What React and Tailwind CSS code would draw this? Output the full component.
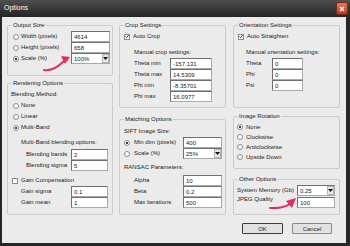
import React from 'react';

function TextBox({ value, className = '' }) {
  return (
    <div
      className={`h-[11px] shrink-0 bg-white border border-[#a9a9a9] border-t-[#707070] border-l-[#707070] flex items-center pl-[2px] leading-none ${className}`}
    >
      {value}
    </div>
  );
}

function Combo({ value, className = '' }) {
  return (
    <div
      className={`h-[11px] shrink-0 bg-white border border-[#a9a9a9] border-t-[#707070] border-l-[#707070] flex items-center leading-none ${className}`}
    >
      <span className="flex-1 pl-[2px]">{value}</span>
      <span className="w-[7px] h-[9px] bg-[#e6e6e6] border border-[#b5b5b5] flex items-center justify-center">
        <svg width="5" height="3" viewBox="0 0 5 3">
          <polygon points="0,0 5,0 2.5,3" fill="#111" />
        </svg>
      </span>
    </div>
  );
}

function Radio({ checked }) {
  return (
    <span className="w-[6px] h-[6px] rounded-full border border-[#8c8c8c] bg-white flex items-center justify-center shrink-0">
      {checked && <span className="w-[2px] h-[2px] rounded-full bg-black" />}
    </span>
  );
}

function Check({ checked }) {
  return (
    <span className="w-[6px] h-[6px] border border-[#8c8c8c] bg-white flex items-center justify-center shrink-0">
      {checked && (
        <svg width="5" height="5" viewBox="0 0 5 5">
          <path d="M0.5 2.5 L2 4 L4.5 0.7" stroke="#111" strokeWidth="1" fill="none" />
        </svg>
      )}
    </span>
  );
}

function Group({ title, className = '', children }) {
  return (
    <fieldset className={`border border-[#cbcbcb] rounded-[2px] ${className}`}>
      <legend className="ml-[4px] px-[1px] leading-[8px]">{title}</legend>
      {children}
    </fieldset>
  );
}

function Row({ className = '', children }) {
  return <div className={`h-[11px] flex items-center ${className}`}>{children}</div>;
}

export default function App() {
  return (
    <div className="relative w-[350px] h-[246px] flex flex-col bg-[#262626] overflow-hidden whitespace-nowrap font-['Tahoma','Liberation_Sans',sans-serif] text-[6px] text-[#222]">
      {/* title bar */}
      <div className="h-[17px] shrink-0 flex items-center justify-between bg-gradient-to-b from-[#505050] to-[#242424] pl-[4px] pr-[2px]">
        <span className="text-white text-[7px]">Options</span>
        <span className="w-[12px] h-[13px] rounded-[2px] border border-[#7a2a1a] bg-gradient-to-b from-[#e9795c] to-[#c4321b] flex items-center justify-center">
          <svg width="6" height="6" viewBox="0 0 6 6">
            <path d="M1 1 L5 5 M5 1 L1 5" stroke="#fff" strokeWidth="1.4" />
          </svg>
        </span>
      </div>

      <div className="flex-1 ml-[2px] mr-[4px] mb-[3px] bg-[#ebebeb] flex pl-[5px] pt-[4px]">
        {/* column 1 */}
        <div className="w-[106px] flex flex-col">
          <Group title="Output Size" className="pt-[2px] pb-[11px] pr-[2px]">
            <Row className="pl-[5px]">
              <Radio />
              <span className="ml-[2px]">Width (pixels)</span>
              <TextBox value="4614" className="ml-auto w-[39px]" />
            </Row>
            <Row className="pl-[5px]">
              <Radio />
              <span className="ml-[2px]">Height (pixels)</span>
              <TextBox value="658" className="ml-auto w-[39px]" />
            </Row>
            <Row className="pl-[5px]">
              <Radio checked />
              <span className="ml-[2px]">Scale (%)</span>
              <Combo value="100%" className="ml-auto w-[39px]" />
            </Row>
          </Group>

          <Group title="Rendering Options" className="mt-[3px] pt-[2px] pb-[6px] pr-[4px]">
            <Row className="pl-[3px]">Blending Method:</Row>
            <Row className="pl-[5px]">
              <Radio />
              <span className="ml-[2px]">None</span>
            </Row>
            <Row className="pl-[5px]">
              <Radio />
              <span className="ml-[2px]">Linear</span>
            </Row>
            <Row className="pl-[5px]">
              <Radio checked />
              <span className="ml-[2px]">Multi-Band</span>
            </Row>
            <Row className="pl-[13px] mt-[4px]">Multi-Band blending options:</Row>
            <Row className="pl-[18px] mt-[1px]">
              <span>Blending bands</span>
              <TextBox value="2" className="ml-auto w-[37px]" />
            </Row>
            <Row className="pl-[18px]">
              <span>Blending sigma</span>
              <TextBox value="5" className="ml-auto w-[37px]" />
            </Row>
            <Row className="pl-[4px] mt-[4px]">
              <Check />
              <span className="ml-[3px]">Gain Compensation</span>
            </Row>
            <Row className="pl-[13px]">
              <span>Gain sigma</span>
              <TextBox value="0.1" className="ml-auto w-[37px]" />
            </Row>
            <Row className="pl-[13px]">
              <span>Gain mean</span>
              <TextBox value="1" className="ml-auto w-[37px]" />
            </Row>
          </Group>
        </div>

        {/* column 2 */}
        <div className="w-[107px] ml-[6px] flex flex-col">
          <Group title="Crop Settings" className="pt-[2px] pb-[5px]">
            <Row className="pl-[4px]">
              <Check checked />
              <span className="ml-[3px]">Auto Crop</span>
            </Row>
            <Row className="pl-[14px] mt-[5px]">Manual crop settings:</Row>
            <div className="pl-[14px] pr-[13px]">
              <Row>
                <span>Theta min</span>
                <TextBox value="-157.131" className="ml-auto w-[42px]" />
              </Row>
              <Row>
                <span>Theta max</span>
                <TextBox value="14.5309" className="ml-auto w-[42px]" />
              </Row>
              <Row>
                <span>Phi min</span>
                <TextBox value="-8.35701" className="ml-auto w-[42px]" />
              </Row>
              <Row>
                <span>Phi max</span>
                <TextBox value="16.0977" className="ml-auto w-[42px]" />
              </Row>
            </div>
          </Group>

          <Group title="Matching Options" className="mt-[7px] pt-[3px] pb-[6px] pr-[3px]">
            <Row className="pl-[4px]">SIFT Image Size:</Row>
            <Row className="pl-[4px]">
              <Radio checked />
              <span className="ml-[4px]">Min dim (pixels)</span>
              <TextBox value="400" className="ml-auto w-[39px]" />
            </Row>
            <Row className="pl-[4px]">
              <Radio />
              <span className="ml-[4px]">Scale (%)</span>
              <Combo value="25%" className="ml-auto w-[39px]" />
            </Row>
            <Row className="pl-[4px] mt-[3px]">RANSAC Parameters:</Row>
            <div className="pl-[14px] mt-[2px]">
              <Row>
                <span>Alpha</span>
                <TextBox value="10" className="ml-auto w-[39px]" />
              </Row>
              <Row>
                <span>Beta</span>
                <TextBox value="0.2" className="ml-auto w-[39px]" />
              </Row>
              <Row>
                <span>Max iterations</span>
                <TextBox value="500" className="ml-auto w-[39px]" />
              </Row>
            </div>
          </Group>
        </div>

        {/* column 3 */}
        <div className="w-[107px] ml-[7px] flex flex-col">
          <Group title="Orientation Settings" className="pt-[2px] pb-[16px]">
            <Row className="pl-[4px]">
              <Check checked />
              <span className="ml-[3px]">Auto Straighten</span>
            </Row>
            <Row className="pl-[12px] mt-[5px]">Manual orientation settings:</Row>
            <div className="pl-[12px]">
              <Row>
                <span className="w-[26px]">Theta</span>
                <TextBox value="0" className="w-[31px]" />
              </Row>
              <Row>
                <span className="w-[26px]">Phi</span>
                <TextBox value="0" className="w-[31px]" />
              </Row>
              <Row>
                <span className="w-[26px]">Psi</span>
                <TextBox value="0" className="w-[31px]" />
              </Row>
            </div>
          </Group>

          <Group title="Image Rotation" className="mt-[4px] pt-[2px] pb-[6px]">
            {['None', 'Clockwise', 'Anticlockwise', 'Upside Down'].map((label, i) => (
              <div key={label} className="h-[10px] flex items-center pl-[3px]">
                <Radio checked={i === 0} />
                <span className="ml-[3px]">{label}</span>
              </div>
            ))}
          </Group>

          <Group title="Other Options" className="mt-[6px] pt-[2px] pb-[6px] pr-[4px]">
            <Row className="pl-[3px]">
              <span>System Memory (Gb)</span>
              <Combo value="0.25" className="ml-auto w-[38px]" />
            </Row>
            <div className="h-[12px] flex items-end pl-[3px]">
              <span className="self-start leading-[6px]">JPEG Quality</span>
              <TextBox value="100" className="ml-auto w-[38px]" />
            </div>
          </Group>

          <div className="mt-[8px] flex pl-[9px]">
            <button className="w-[41px] h-[11px] bg-[#e2e2e2] border border-[#3c3c3c] rounded-[1px] leading-none">
              OK
            </button>
            <button className="w-[40px] h-[11px] ml-[9px] bg-[#e2e2e2] border border-[#8a8a8a] rounded-[1px] leading-none">
              Cancel
            </button>
          </div>
        </div>
      </div>

      {/* annotation arrows */}
      <svg className="absolute inset-0 pointer-events-none" width="350" height="246" viewBox="0 0 350 246">
        <path d="M44 70 C50 71 57 68 64 61" stroke="#e72a5f" strokeWidth="2" fill="none" strokeLinecap="round" />
        <polygon points="70,57 61,56 65,64" fill="#e72a5f" />
        <path d="M270 208 C278 208 284 208 290 204" stroke="#e72a5f" strokeWidth="2" fill="none" strokeLinecap="round" />
        <polygon points="296,198 286,201 292,208" fill="#e72a5f" />
      </svg>
    </div>
  );
}
